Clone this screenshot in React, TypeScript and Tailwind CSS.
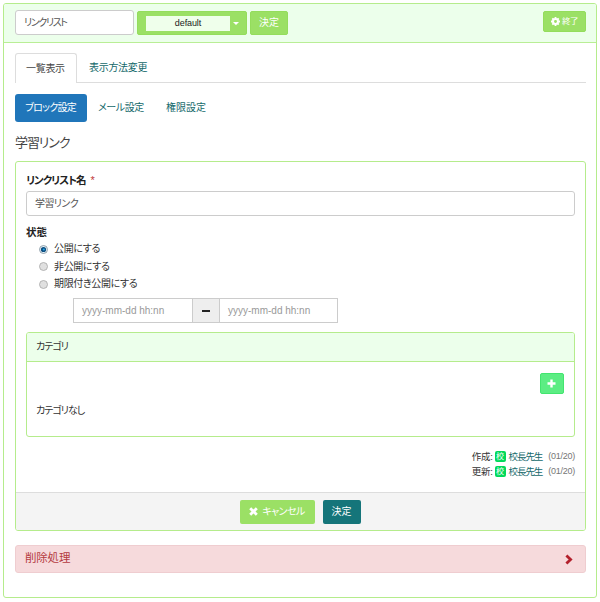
import type { ReactNode } from 'react'

const MODES = [
  { id: 'public', label: '公開にする', checked: true },
  { id: 'private', label: '非公開にする', checked: false },
  { id: 'limited', label: '期限付き公開にする', checked: false },
]

const HISTORY = [
  { label: '作成:', user: '校長先生', date: '(01/20)' },
  { label: '更新:', user: '校長先生', date: '(01/20)' },
]

function CogIcon() {
  return (
    <svg viewBox="0 0 16 16" className="h-[9px] w-[9px] shrink-0">
      <circle cx="8" cy="8" r="4.4" fill="none" stroke="currentColor" strokeWidth="3.6" />
      <path
        d="M8 0v3M8 13v3M0 8h3M13 8h3M2.3 2.3l2.2 2.2M11.5 11.5l2.2 2.2M2.3 13.7l2.2-2.2M11.5 4.5l2.2-2.2"
        stroke="currentColor"
        strokeWidth="3.2"
      />
    </svg>
  )
}

function RemoveIcon() {
  return (
    <svg viewBox="0 0 9 9" className="h-[9px] w-[9px] shrink-0">
      <path d="M1.2 1.2l6.6 6.6M7.8 1.2L1.2 7.8" stroke="currentColor" strokeWidth="2.8" />
    </svg>
  )
}

function PlusIcon() {
  return (
    <svg viewBox="0 0 9 9" className="mr-[2px] h-[9px] w-[9px]">
      <path d="M4.5 .5v8M.5 4.5h8" stroke="currentColor" strokeWidth="2.4" />
    </svg>
  )
}

function ChevronRightIcon() {
  return (
    <svg viewBox="0 0 8 11" className="h-[11px] w-2">
      <path d="M1.4 1.4L5.6 5.5L1.4 9.6" fill="none" stroke="#b3202c" strokeWidth="2.8" />
    </svg>
  )
}

function Radio({ checked }: { checked: boolean }) {
  return (
    <svg viewBox="0 0 9 9" className="h-[9px] w-[9px] shrink-0">
      <circle cx="4.5" cy="4.5" r="4" fill={checked ? '#e3eef5' : '#e0e0e0'} stroke={checked ? '#7f909c' : '#a6a6a6'} strokeWidth=".8" />
      {checked && <circle cx="4.5" cy="4.5" r="2.6" fill="#0b4d80" />}
      {checked && <circle cx="4.8" cy="4.5" r="1.1" fill="#28a8e8" />}
    </svg>
  )
}

function Panel({ className, children }: { className: string; children: ReactNode }) {
  return <div className={`overflow-hidden rounded-[3px] border border-[#b5ec8c] bg-white ${className}`}>{children}</div>
}

export default function App() {
  return (
    <div className="h-[602px] w-[600px] bg-white pt-[3px] pl-[3px] font-['Liberation_Sans','Noto_Sans_CJK_JP',sans-serif] text-[10px] leading-none whitespace-nowrap text-[#333] [font-feature-settings:'palt']">
      <Panel className="h-[595px] w-[594px]">
        <header className="flex h-[39px] items-start border-b border-[#b9ee95] bg-[#ecffeb] pt-1.5 pr-[10px] pl-[11px]">
          <div className="flex h-[25px] w-[119px] items-center rounded-[3px] border border-[#ccc] bg-white pl-2 tracking-[-1.4px] text-[#555]">
            リンクリスト
          </div>
          <button className="mt-px ml-[3px] flex h-6 w-[110px] items-center rounded-[2px] border border-[#94dd5c] bg-[#9be065] pl-2">
            <span className="flex h-[15px] w-[84px] items-center justify-center bg-[#efffeb] text-[9px] tracking-[-0.1px] text-[#222]">
              default
            </span>
            <span className="ml-[3px] border-x-[3px] border-t-[3px] border-x-transparent border-t-white" />
          </button>
          <button className="mt-px ml-[3px] flex h-6 w-[38px] items-center justify-center rounded-[2px] border border-[#94dd5c] bg-[#9be065] text-white">
            決定
          </button>
          <button className="mt-px ml-auto flex h-[21px] w-[43px] items-center justify-center gap-[2px] rounded-[2px] border border-[#94dd5c] bg-[#9be065] text-[8.5px] tracking-[-0.4px] text-white">
            <CogIcon />
            終了
          </button>
        </header>

        <div className="pt-[10px] pr-[10px] pl-[11px]">
          <nav className="flex h-[30px] border-b border-[#ddd]">
            <span className="flex h-[30px] w-[62px] items-center rounded-t-[3px] border border-b-0 border-[#ddd] bg-white pl-[10px] tracking-[-0.3px] text-[#444]">
              一覧表示
            </span>
            <span className="ml-3 flex items-center tracking-[-0.3px] text-[#14696b]">表示方法変更</span>
          </nav>

          <nav className="mt-[11px] flex h-7 items-center text-[#14696b]">
            <span className="flex h-full w-[72px] items-center rounded-[3px] bg-[#2076ba] pl-[10px] tracking-[-0.7px] text-white">
              ブロック設定
            </span>
            <span className="ml-[11px] tracking-[-0.4px]">メール設定</span>
            <span className="ml-[22px]">権限設定</span>
          </nav>

          <h1 className="mt-[14px] h-[14px] text-[13px] tracking-[-1.1px] text-[#444]">学習リンク</h1>

          <Panel className="mt-[11px] h-[370px]">
            <div className="h-[330px] px-[10px] pt-[13px]">
              <div className="flex h-[11px] text-[10.5px] font-bold tracking-[-0.95px] text-[#222]">
                リンクリスト名
                <span className="ml-[5px] text-[11px] font-normal text-[#c0383c]">*</span>
              </div>
              <div className="mt-[5px] flex h-[25px] items-center rounded-[3px] border border-[#ccc] pl-2 tracking-[-0.6px] text-[#555]">
                学習リンク
              </div>
              <div className="mt-[11px] text-[10.5px] font-bold text-[#222]">状態</div>
              <div className="mt-[3px] pl-[13px]">
                {MODES.map((mode) => (
                  <label key={mode.id} className="flex h-[17.5px] items-center gap-1.5 tracking-[-0.35px]">
                    <Radio checked={mode.checked} />
                    {mode.label}
                  </label>
                ))}
              </div>
              <div className="mt-[5px] ml-[47px] flex h-[25px] w-[265px] border border-[#ccc] text-[#999]">
                <span className="flex w-[118px] items-center pl-2">yyyy-mm-dd hh:nn</span>
                <span className="flex w-[28px] items-center justify-center border-x border-[#ccc] bg-[#eee]">
                  <span className="h-[2px] w-2 bg-[#222]" />
                </span>
                <span className="flex items-center pl-2">yyyy-mm-dd hh:nn</span>
              </div>

              <Panel className="mt-[9px] h-[105px] tracking-[-1px]">
                <div className="flex h-[29px] items-center border-b border-[#b5ec8c] bg-[#ecffeb] pl-[9px]">カテゴリ</div>
                <div className="flex justify-end pt-[11px] pr-[10px]">
                  <button className="flex h-[21px] w-6 items-center justify-center rounded-[2px] border border-[#43e56f] bg-[#5ced83] text-white">
                    <PlusIcon />
                  </button>
                </div>
                <div className="mt-3 pl-[9px]">カテゴリなし</div>
              </Panel>

              <div className="mt-3">
                {HISTORY.map((item) => (
                  <div key={item.label} className="flex h-[15px] items-center justify-end text-[9.5px]">
                    <span className="tracking-[-0.3px]">{item.label}</span>
                    <span className="ml-[2px] flex h-[11px] w-[11px] items-center justify-center rounded-[2px] bg-[#00d95a] text-[8px] text-white">
                      校
                    </span>
                    <span className="ml-[3px] tracking-[-1.1px] text-[#14696b]">{item.user}</span>
                    <span className="ml-[6px] text-[9px] tracking-[-0.25px] text-[#777]">{item.date}</span>
                  </div>
                ))}
              </div>
            </div>
            <footer className="flex h-[38px] items-center justify-center gap-2 border-t border-[#ddd] bg-[#f4f4f4] pr-px text-white">
              <button className="flex h-6 w-[75px] items-center justify-center gap-1 rounded-[2px] bg-[#9be065] tracking-[-0.6px]">
                <RemoveIcon />
                キャンセル
              </button>
              <button className="flex h-6 w-[38px] items-center justify-center rounded-[2px] bg-[#15757a]">決定</button>
            </footer>
          </Panel>

          <div className="mt-[14px] flex h-[28px] items-center justify-between rounded-[3px] border border-[#efcdd0] bg-[#f6dadc] pr-3 pl-[9px] text-[11.5px] tracking-[-0.2px] text-[#b43a41]">
            削除処理
            <ChevronRightIcon />
          </div>
        </div>
      </Panel>
    </div>
  )
}
